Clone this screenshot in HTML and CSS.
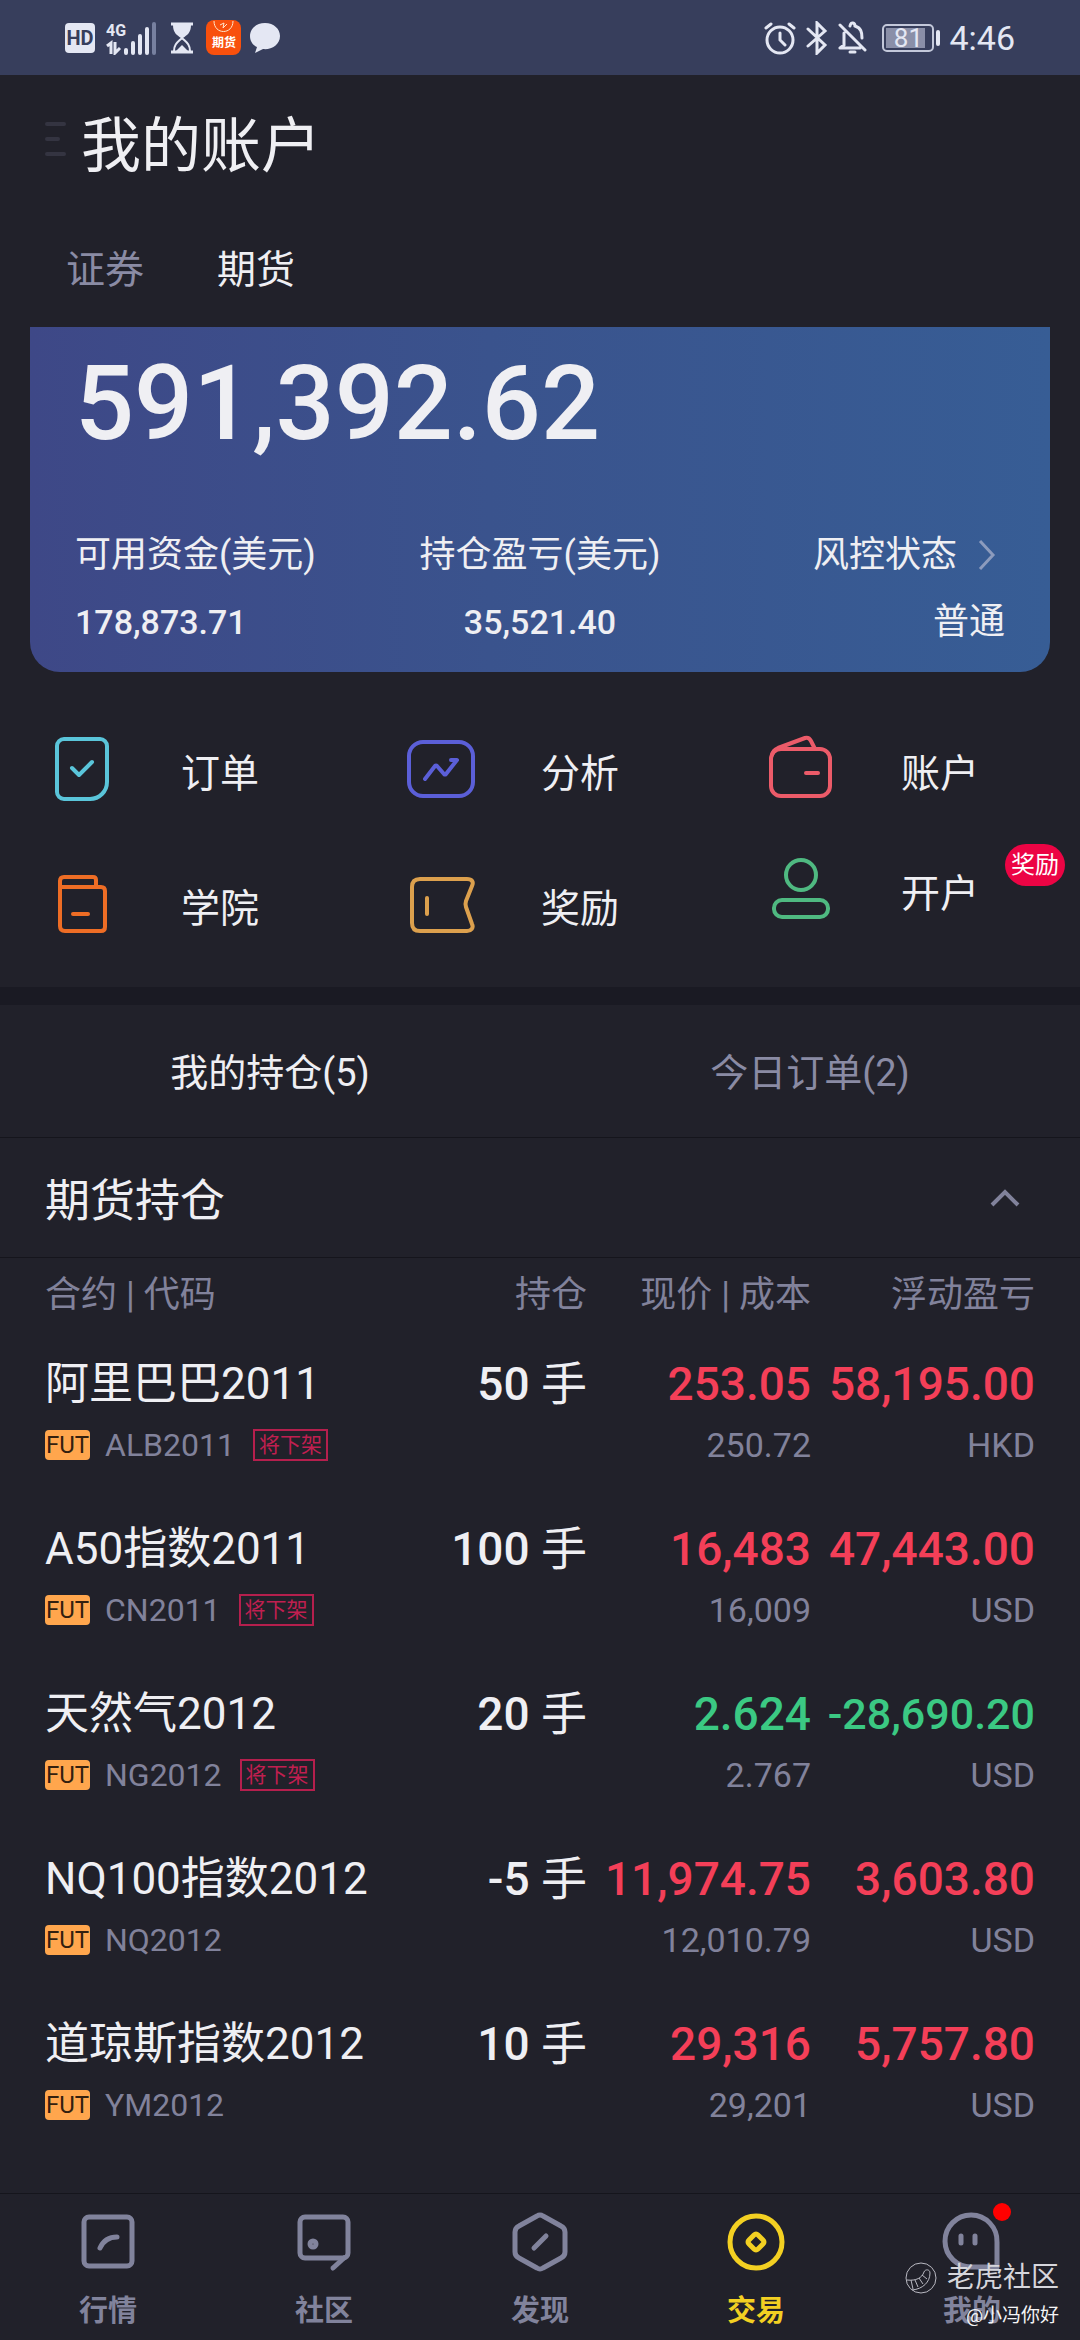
FILE: index.html
```html
<!DOCTYPE html>
<html lang="zh-CN">
<head>
    <meta charset="UTF-8">
    <meta name="viewport" content="width=device-width, initial-scale=1.0">
    <title>我的账户</title>
    <link rel="stylesheet" href="styles.css">
</head>
<body>
    <div class="status-bar">
        <div class="status-left">
            <span class="hd">HD</span>
            <svg class="signal" width="52" height="34" viewBox="0 0 52 34">
                <text x="0" y="15" class="net">4G</text>
                <path d="M1 25l4-3v11M9 21v11l5-5" fill="none" stroke="#e4e7f3" stroke-width="3"/>
                <path d="M20 29v3M27 22v10M34 15v17M41 8v24" stroke="#e4e7f3" stroke-width="4" stroke-linecap="round"/>
                <path d="M48 3v29" stroke="#77809f" stroke-width="4" stroke-linecap="round"/>
            </svg>
            <svg class="hourglass" width="24" height="32" viewBox="0 0 24 32">
                <path d="M1 2h22M1 30h22" stroke="#e4e7f3" stroke-width="3"/>
                <path d="M3 3h18c0 8-4 10-8 13h-2C7 13 3 11 3 3z" fill="#e4e7f3"/>
                <path d="M4 29c0-7 4-9 8-13 4 4 8 6 8 13" fill="none" stroke="#e4e7f3" stroke-width="2"/>
                <path d="M6 29l6-6 6 6z" fill="#e4e7f3"/>
            </svg>
            <svg class="app" width="36" height="36" viewBox="0 0 36 36">
                <rect width="35" height="35" rx="8" fill="#f8500d"/>
                <path d="M8 1c0 14 19 14 19 0M14 5l4-2-1 5 4-4" fill="none" stroke="#ffe5cc" stroke-width="1"/>
                <text x="6" y="27" class="app-text">期货</text>
            </svg>
            <svg width="32" height="32" viewBox="0 0 32 32">
                <path d="M16 1c9 0 15 6 15 13 0 9-9 14-17 13l-8 4 2-6C3 23 1 18 1 14 1 7 7 1 16 1z" fill="#e4e7f3"/>
            </svg>
        </div>
        <div class="status-right">
            <svg width="32" height="34" viewBox="0 0 32 34" fill="none" stroke="#e4e7f3" stroke-width="3" stroke-linecap="round">
                <circle cx="16" cy="19" r="13"/>
                <path d="M2 7l5-4M25 3l5 4M16 12v7l5 5"/>
            </svg>
            <svg class="bluetooth" width="22" height="34" viewBox="0 0 22 34" fill="none" stroke="#e4e7f3" stroke-width="3" stroke-linecap="round">
                <path d="M2 8l17 16-8 8V2l8 8L2 25"/>
            </svg>
            <svg class="bell" width="30" height="34" viewBox="0 0 30 34" fill="none" stroke="#e4e7f3" stroke-width="3" stroke-linecap="round">
                <path d="M2 4l25 25M2 27h20M6 12v12l-4 3M12 5c1-5 5-3 5 0 6 2 7 6 7 12"/>
                <path d="M12 31h5"/>
            </svg>
            <span class="battery">81</span>
            <span class="time">4:46</span>
        </div>
    </div>

    <header class="title-row">
        <svg width="24" height="40" viewBox="0 0 24 40" stroke="#343441" stroke-width="4" stroke-linecap="round">
            <path d="M2 4h17M2 19h11M2 34h17"/>
        </svg>
        <h1>我的账户</h1>
    </header>

    <div class="account-tabs">
        <button>证券</button>
        <button class="active">期货</button>
    </div>

    <section class="card">
        <div class="total">591,392.62</div>
        <div class="card-info">
            <div class="info">
                <div class="info-label">可用资金(美元)</div>
                <div class="info-value">178,873.71</div>
            </div>
            <div class="info info-center">
                <div class="info-label">持仓盈亏(美元)</div>
                <div class="info-value">35,521.40</div>
            </div>
            <div class="info info-right">
                <div class="info-label">风控状态
                    <svg class="arrow" width="20" height="34" viewBox="0 0 20 34" fill="none" stroke="#8c9bbd" stroke-width="3">
                        <path d="M3 3l13 14L3 31"/>
                    </svg>
                </div>
                <div class="info-value status-value">普通</div>
            </div>
        </div>
    </section>

    <nav class="features">
        <a href="#" class="feature">
            <svg class="feature-icon" viewBox="0 0 72 72" stroke="#5ac5da">
                <path d="M19 5h36a7 7 0 0 1 7 7v36a17 17 0 0 1-17 17H19a7 7 0 0 1-7-7V12a7 7 0 0 1 7-7z"/>
                <path d="M27 34l7 7 13-13"/>
            </svg>
            订单
        </a>
        <a href="#" class="feature">
            <svg class="feature-icon" viewBox="0 0 72 72" stroke="#5b5fd8">
                <rect x="4" y="8" width="64" height="54" rx="14"/>
                <path d="M20 45l10-13q1-1 2 0l7 8q1 1 2 0l11-14h-6"/>
            </svg>
            分析
        </a>
        <a href="#" class="feature">
            <svg class="feature-icon" viewBox="0 0 72 72" stroke="#ec5b69">
                <rect x="6" y="15" width="59" height="47" rx="10"/>
                <path d="M7 21q1-5 6-7L40 4q4-1 6 3l4 8M41 39h12"/>
            </svg>
            账户
        </a>
        <a href="#" class="feature">
            <svg class="feature-icon" viewBox="0 0 72 72" stroke="#ee6d25">
                <path d="M15 18V12q0-4 4-4h29q3 0 3 3v7"/>
                <path d="M15 18h41q4 0 4 4v36q0 4-4 4H20q-5 0-5-5z"/>
                <path d="M28 45h15"/>
            </svg>
            学院
        </a>
        <a href="#" class="feature">
            <svg class="feature-icon" viewBox="0 0 72 72" stroke="#dca04d">
                <path d="M15 10h47c5 0 7 3 5 7l-6 15q-1 3 0 6l6 17c2 4-1 7-5 7H15q-8 0-8-8V18q0-8 8-8z"/>
                <path d="M22 29v16"/>
            </svg>
            奖励
        </a>
        <a href="#" class="feature feature-open">
            <svg class="feature-icon" viewBox="0 0 72 72" stroke="#4fb981">
                <circle cx="36" cy="21" r="15"/>
                <rect x="9" y="46" width="54" height="17" rx="8"/>
            </svg>
            开户
            <span class="badge">奖励</span>
        </a>
    </nav>

    <main class="positions">
        <div class="position-tabs">
            <button class="active">我的持仓(5)</button>
            <button>今日订单(2)</button>
        </div>
        <div class="group-header">
            <h2>期货持仓</h2>
            <button class="collapse" aria-label="收起">
                <svg width="30" height="20" viewBox="0 0 30 20" fill="none" stroke="#81829b" stroke-width="4">
                    <path d="M2 17L15 4l13 13"/>
                </svg>
            </button>
        </div>
        <table class="table">
            <thead>
                <tr>
                    <th class="col-name">合约 | 代码</th>
                    <th class="col-qty">持仓</th>
                    <th class="col-price">现价 | 成本</th>
                    <th class="col-pnl">浮动盈亏</th>
                </tr>
            </thead>
            <tbody>
                <tr>
                    <td>
                        <div class="name">阿里巴巴2011</div>
                        <div class="sub"><span class="fut">FUT</span>ALB2011<span class="delist">将下架</span></div>
                    </td>
                    <td><div class="value">50 <span class="unit">手</span></div></td>
                    <td><div class="value up">253.05</div><div class="sub">250.72</div></td>
                    <td><div class="value up">58,195.00</div><div class="sub">HKD</div></td>
                </tr>
                <tr>
                    <td>
                        <div class="name">A50指数2011</div>
                        <div class="sub"><span class="fut">FUT</span>CN2011<span class="delist">将下架</span></div>
                    </td>
                    <td><div class="value">100 <span class="unit">手</span></div></td>
                    <td><div class="value up">16,483</div><div class="sub">16,009</div></td>
                    <td><div class="value up">47,443.00</div><div class="sub">USD</div></td>
                </tr>
                <tr>
                    <td>
                        <div class="name">天然气2012</div>
                        <div class="sub"><span class="fut">FUT</span>NG2012<span class="delist">将下架</span></div>
                    </td>
                    <td><div class="value">20 <span class="unit">手</span></div></td>
                    <td><div class="value down">2.624</div><div class="sub">2.767</div></td>
                    <td><div class="value down long">-28,690.20</div><div class="sub">USD</div></td>
                </tr>
                <tr>
                    <td>
                        <div class="name">NQ100指数2012</div>
                        <div class="sub"><span class="fut">FUT</span>NQ2012</div>
                    </td>
                    <td><div class="value">-5 <span class="unit">手</span></div></td>
                    <td><div class="value up">11,974.75</div><div class="sub">12,010.79</div></td>
                    <td><div class="value up">3,603.80</div><div class="sub">USD</div></td>
                </tr>
                <tr>
                    <td>
                        <div class="name">道琼斯指数2012</div>
                        <div class="sub"><span class="fut">FUT</span>YM2012</div>
                    </td>
                    <td><div class="value">10 <span class="unit">手</span></div></td>
                    <td><div class="value up">29,316</div><div class="sub">29,201</div></td>
                    <td><div class="value up">5,757.80</div><div class="sub">USD</div></td>
                </tr>
            </tbody>
        </table>
    </main>

    <nav class="bottom-nav">
        <a href="#" class="nav-item">
            <svg class="nav-icon" viewBox="0 0 66 66">
                <rect x="9" y="8" width="48" height="49" rx="5"/>
                <path d="M25 39q5-11 17-11"/>
            </svg>
            行情
        </a>
        <a href="#" class="nav-item">
            <svg class="nav-icon" viewBox="0 0 66 66">
                <rect x="9" y="8" width="48" height="41" rx="5"/>
                <path d="M53 49l-11 10"/>
                <circle cx="22" cy="35" r="3"/>
            </svg>
            社区
        </a>
        <a href="#" class="nav-item">
            <svg class="nav-icon" viewBox="0 0 66 66">
                <path d="M30 7q3-2 6 0l18 10q4 2 4 6v20q0 4-4 6L36 59q-3 2-6 0L12 49q-4-2-4-6V23q0-4 4-6z"/>
                <path d="M27 39l12-12"/>
            </svg>
            发现
        </a>
        <a href="#" class="nav-item active">
            <svg class="nav-icon" viewBox="0 0 66 66">
                <circle cx="33" cy="33" r="26"/>
                <path d="M31 26q2-2 4 0l5 5q2 2 0 4l-5 5q-2 2-4 0l-5-5q-2-2 0-4z"/>
            </svg>
            交易
        </a>
        <a href="#" class="nav-item nav-mine">
            <svg class="nav-icon" viewBox="0 0 66 66">
                <path d="M58 58H33A26 26 0 1 1 58 33z"/>
                <path d="M22 27v7M36 27v7"/>
            </svg>
            我的
            <span class="dot"></span>
        </a>
        <div class="watermark">
            <div class="brand">
                <svg width="32" height="32" viewBox="0 0 32 32" fill="none" stroke="#b9b9c2" stroke-width="1">
                    <circle cx="16" cy="16" r="15"/>
                    <path d="M2 18c9 1 15-2 17-8 1-3 6-3 6 1 0 9-7 16-18 17M6 18l2 9M10 18l3 7M14 16l4 6M17 13l5 4"/>
                </svg>
                老虎社区
            </div>
            <div class="author">@小冯你好</div>
        </div>
    </nav>
</body>
</html>
```
FILE: styles.css
```css
* {
    box-sizing: border-box;
}

body {
    margin: 0;
    min-height: 100vh;
    display: flex;
    flex-direction: column;
    background-color: #21212a;
    color: #efeff3;
    font-family: Roboto, "Noto Sans CJK SC", sans-serif;
}

h1, h2 {
    margin: 0;
    font-weight: 400;
}

a {
    color: inherit;
    text-decoration: none;
}

button {
    padding: 0;
    background: none;
    border: none;
    color: #8a8ba4;
    font: inherit;
    cursor: pointer;
}

button.active {
    color: #efeff3;
}

svg {
    flex: none;
}

/* Status bar */
.status-bar {
    height: 75px;
    display: flex;
    justify-content: space-between;
    align-items: center;
    padding: 0 65px;
    background-color: #373e5c;
    color: #e4e7f3;
}

.status-left, .status-right {
    display: flex;
    align-items: center;
}

.hd {
    width: 30px;
    height: 30px;
    border-radius: 4px;
    background-color: #e4e7f3;
    color: #373e5c;
    font-size: 20px;
    font-weight: 700;
    line-height: 31px;
    text-align: center;
}

.signal {
    margin-left: 11px;
}

.net {
    font-size: 16px;
    font-weight: 700;
    fill: #e4e7f3;
}

.hourglass {
    margin: 0 12px;
}

.app {
    margin-right: 7px;
}

.app-text {
    font-size: 12px;
    font-weight: 700;
    fill: #fff;
}

.bluetooth {
    margin-left: 10px;
}

.bell {
    margin: 0 14px 0 10px;
}

.battery {
    position: relative;
    width: 52px;
    height: 28px;
    border: 2px solid #c3c8da;
    border-radius: 5px;
    background: linear-gradient(#8a8fa8, #8a8fa8) 2px 2px / 39px 20px no-repeat;
    font-size: 26px;
    line-height: 24px;
    text-align: center;
}

.battery::after {
    content: "";
    position: absolute;
    top: 4px;
    right: -8px;
    width: 4px;
    height: 16px;
    border-radius: 2px;
    background-color: #e4e7f3;
}

.time {
    margin-left: 15px;
    font-size: 34px;
}

/* Title */
.title-row {
    display: flex;
    align-items: center;
    gap: 12px;
    height: 130px;
    padding: 0 45px;
}

h1 {
    font-size: 60px;
}

.account-tabs {
    display: flex;
    gap: 73px;
    height: 122px;
    padding: 0 66px;
    font-size: 39px;
}

/* Account card */
.card {
    margin: 0 30px;
    padding: 17px 45px 27px;
    border-radius: 0 0 30px 30px;
    background: linear-gradient(90deg, #3e4887, #3a538d 45%, #375d95);
}

.total {
    font-size: 104px;
    font-weight: 500;
    line-height: 120px;
}

.card-info {
    display: grid;
    grid-template-columns: 1fr auto 1fr;
    margin-top: 65px;
}

.info-label {
    font-size: 36px;
    line-height: 52px;
    white-space: nowrap;
}

.info-value {
    margin-top: 18px;
    font-size: 34px;
    font-weight: 500;
    line-height: 46px;
}

.info-center {
    text-align: center;
}

.info-right {
    text-align: right;
}

.info-right .info-label {
    display: flex;
    justify-content: flex-end;
    align-items: center;
    gap: 20px;
    padding-right: 8px;
}

.status-value {
    font-size: 36px;
    font-weight: 400;
}

/* Feature links */
.features {
    display: grid;
    grid-template-columns: repeat(3, 1fr);
    grid-auto-rows: 135px;
    padding: 30px 0 15px;
    border-bottom: 18px solid #1a1a23;
    font-size: 39px;
}

.feature {
    position: relative;
    display: flex;
    align-items: center;
    gap: 64px;
    padding-left: 45px;
}

.feature-icon {
    width: 72px;
    height: 72px;
    fill: none;
    stroke-width: 4;
    stroke-linecap: round;
    stroke-linejoin: round;
}

.feature-open {
    height: 105px;
}

.badge {
    position: absolute;
    top: 7px;
    right: 15px;
    width: 60px;
    border-radius: 21px;
    background-color: #ec0444;
    color: #fff;
    font-size: 24px;
    line-height: 42px;
    text-align: center;
}

/* Positions */
.positions {
    flex: 1;
}

.position-tabs {
    display: flex;
    height: 133px;
    padding-bottom: 4px;
    border-bottom: 1px solid #15151c;
    font-size: 38px;
}

.position-tabs button {
    flex: 1;
}

.group-header {
    display: flex;
    justify-content: space-between;
    align-items: center;
    height: 120px;
    padding: 0 60px 0 45px;
    border-bottom: 1px solid #15151c;
}

h2 {
    font-size: 45px;
}

.collapse {
    display: flex;
}

.table {
    width: 100%;
    padding: 0 45px;
    border-spacing: 0;
    table-layout: fixed;
}

th, td {
    padding: 0;
    text-align: right;
    vertical-align: top;
    white-space: nowrap;
}

th:first-child, td:first-child {
    text-align: left;
}

th {
    height: 82px;
    padding-top: 7px;
    color: #81829b;
    font-size: 36px;
    font-weight: 400;
}

.col-qty {
    width: 160px;
}

.col-price, .col-pnl {
    width: 224px;
}

td {
    height: 165px;
    padding-top: 17px;
}

.name {
    font-size: 44px;
    line-height: 54px;
}

.value {
    font-size: 46px;
    font-weight: 500;
    line-height: 54px;
}

.unit {
    font-weight: 400;
}

.long {
    font-size: 43px;
}

.up {
    color: #f43f58;
}

.down {
    color: #3bc983;
}

.sub {
    display: flex;
    align-items: center;
    justify-content: flex-end;
    height: 40px;
    margin-top: 14px;
    color: #81829b;
    font-size: 34px;
}

td:first-child .sub {
    justify-content: flex-start;
    font-size: 32px;
}

.fut {
    width: 45px;
    margin-right: 15px;
    border-radius: 4px;
    background-color: #ffa64d;
    color: #33200f;
    font-size: 24px;
    line-height: 30px;
    text-align: center;
}

.delist {
    width: 75px;
    margin-left: 18px;
    border: 2px solid #b51f4d;
    color: #c01f50;
    font-size: 21px;
    line-height: 28px;
    text-align: center;
}

/* Bottom navigation */
.bottom-nav {
    position: relative;
    display: flex;
    height: 147px;
    padding-top: 15px;
    border-top: 1px solid #15151c;
    color: #81839c;
    font-size: 29px;
    font-weight: 700;
}

.nav-item {
    flex: 1;
    display: flex;
    flex-direction: column;
    align-items: center;
    gap: 16px;
    line-height: 40px;
}

.nav-item.active {
    color: #f3d022;
}

.nav-icon {
    width: 66px;
    height: 66px;
    fill: none;
    stroke: currentColor;
    stroke-width: 5;
    stroke-linecap: round;
    stroke-linejoin: round;
}

.nav-mine {
    position: relative;
}

.dot {
    position: absolute;
    top: -6px;
    left: calc(50% + 21px);
    width: 18px;
    height: 18px;
    border-radius: 50%;
    background-color: #f00;
}

.watermark {
    position: absolute;
    right: 21px;
    bottom: 8px;
    color: #f4f4f6;
    font-size: 19px;
    font-weight: 400;
    text-align: right;
}

.brand {
    display: flex;
    align-items: center;
    gap: 10px;
    color: #d6d6dc;
    font-size: 28px;
    line-height: 40px;
}

.author {
    margin-top: 2px;
    line-height: 32px;
}
```
